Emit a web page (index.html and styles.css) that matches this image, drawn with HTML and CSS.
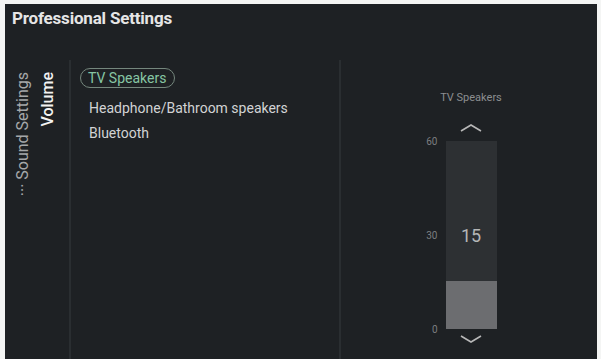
FILE: index.html
```html
<!DOCTYPE html>
<html lang="en">
<head>
  <meta charset="UTF-8">
  <title>Professional Settings</title>
  <link rel="stylesheet" href="styles.css">
</head>
<body>
  <div class="screen">
    <header class="title">Professional Settings</header>

    <main class="panes">
      <!-- breadcrumb trail, rotated -->
      <nav class="trail">
        <span class="crumb">··· Sound Settings</span>
        <span class="crumb current">Volume</span>
      </nav>

      <ul class="menu">
        <li class="item selected">TV Speakers</li>
        <li class="item">Headphone/Bathroom speakers</li>
        <li class="item">Bluetooth</li>
      </ul>

      <section class="slider">
        <div class="slider-label">TV Speakers</div>
        <svg class="chev" width="24" height="9" viewBox="0 0 24 9"><polyline points="2,8 12,2 22,8" fill="none" stroke="#b8b8b8" stroke-width="1.6"/></svg>
        <div class="track">
          <span class="tick" style="top: 0%">60</span>
          <span class="tick" style="top: 50%">30</span>
          <span class="tick" style="top: 100%">0</span>
          <span class="value">15</span>
          <div class="fill" style="height: 25.5%"></div>
        </div>
        <svg class="chev" width="24" height="9" viewBox="0 0 24 9"><polyline points="2,1 12,7 22,1" fill="none" stroke="#b8b8b8" stroke-width="1.6"/></svg>
      </section>
    </main>
  </div>
</body>
</html>
```

FILE: styles.css
```css
html, body {
  margin: 0;
  padding: 0;
  height: 100%;
  background: #f4f5f4;
}

.screen {
  margin: 4px 4px 0 5px;
  height: calc(100% - 4px);
  background: #1e2124;
  display: flex;
  flex-direction: column;
  font-family: Roboto, "Liberation Sans", sans-serif;
  overflow: hidden;
}

.title {
  height: 56px;
  box-sizing: border-box;
  padding: 4px 0 0 7px;
  color: #e6e6e6;
  font-size: 17px;
  font-weight: bold;
  letter-spacing: -0.2px;
}

.panes {
  flex: 1;
  display: flex;
}

.trail {
  width: 66px;
  border-right: 2px solid #2a2e31;
  display: flex;
  align-items: flex-start;
  padding: 12px 0 0 9px;
  box-sizing: border-box;
  gap: 8px;
}

.crumb {
  writing-mode: vertical-rl;
  transform: rotate(180deg);
  font-size: 16px;
  color: #a5a7a9;
  line-height: 17px;
}

.crumb.current {
  color: #f2f2f2;
  font-weight: 500;
}

.menu {
  list-style: none;
  margin: 0;
  padding: 8px 0 0 9px;
  width: 270px;
  box-sizing: border-box;
  border-right: 2px solid #2a2e31;
  display: flex;
  flex-direction: column;
  align-items: flex-start;
  gap: 7px;
}

.item {
  font-size: 14px;
  color: #d2d3d4;
  padding: 0 9px;
  line-height: 18px;
}

.item.selected {
  color: #86c5a3;
  border: 1px solid #75877d;
  border-radius: 11px;
  padding: 0 8px 0 7px;
  margin-bottom: 4px;
}

.slider {
  flex: 1;
  display: flex;
  flex-direction: column;
  align-items: center;
  padding: 31px 0 0 4px;
}

.slider-label {
  font-size: 11px;
  line-height: 13px;
  color: #8c8e90;
  margin-bottom: 19px;
}

.chev {
  display: block;
}

.track {
  position: relative;
  width: 51px;
  height: 188px;
  margin: 9px 0 6px;
  background: #2d3033;
  display: flex;
  flex-direction: column;
  justify-content: flex-end;
}

.tick {
  position: absolute;
  right: 59px;
  transform: translateY(-50%);
  font-size: 10px;
  color: #7c7e80;
}

.value {
  position: absolute;
  top: 50%;
  left: 0;
  right: 0;
  transform: translateY(-50%);
  text-align: center;
  font-size: 18px;
  color: #b5b6b7;
}

.fill {
  background: #6c6d70;
}
```
